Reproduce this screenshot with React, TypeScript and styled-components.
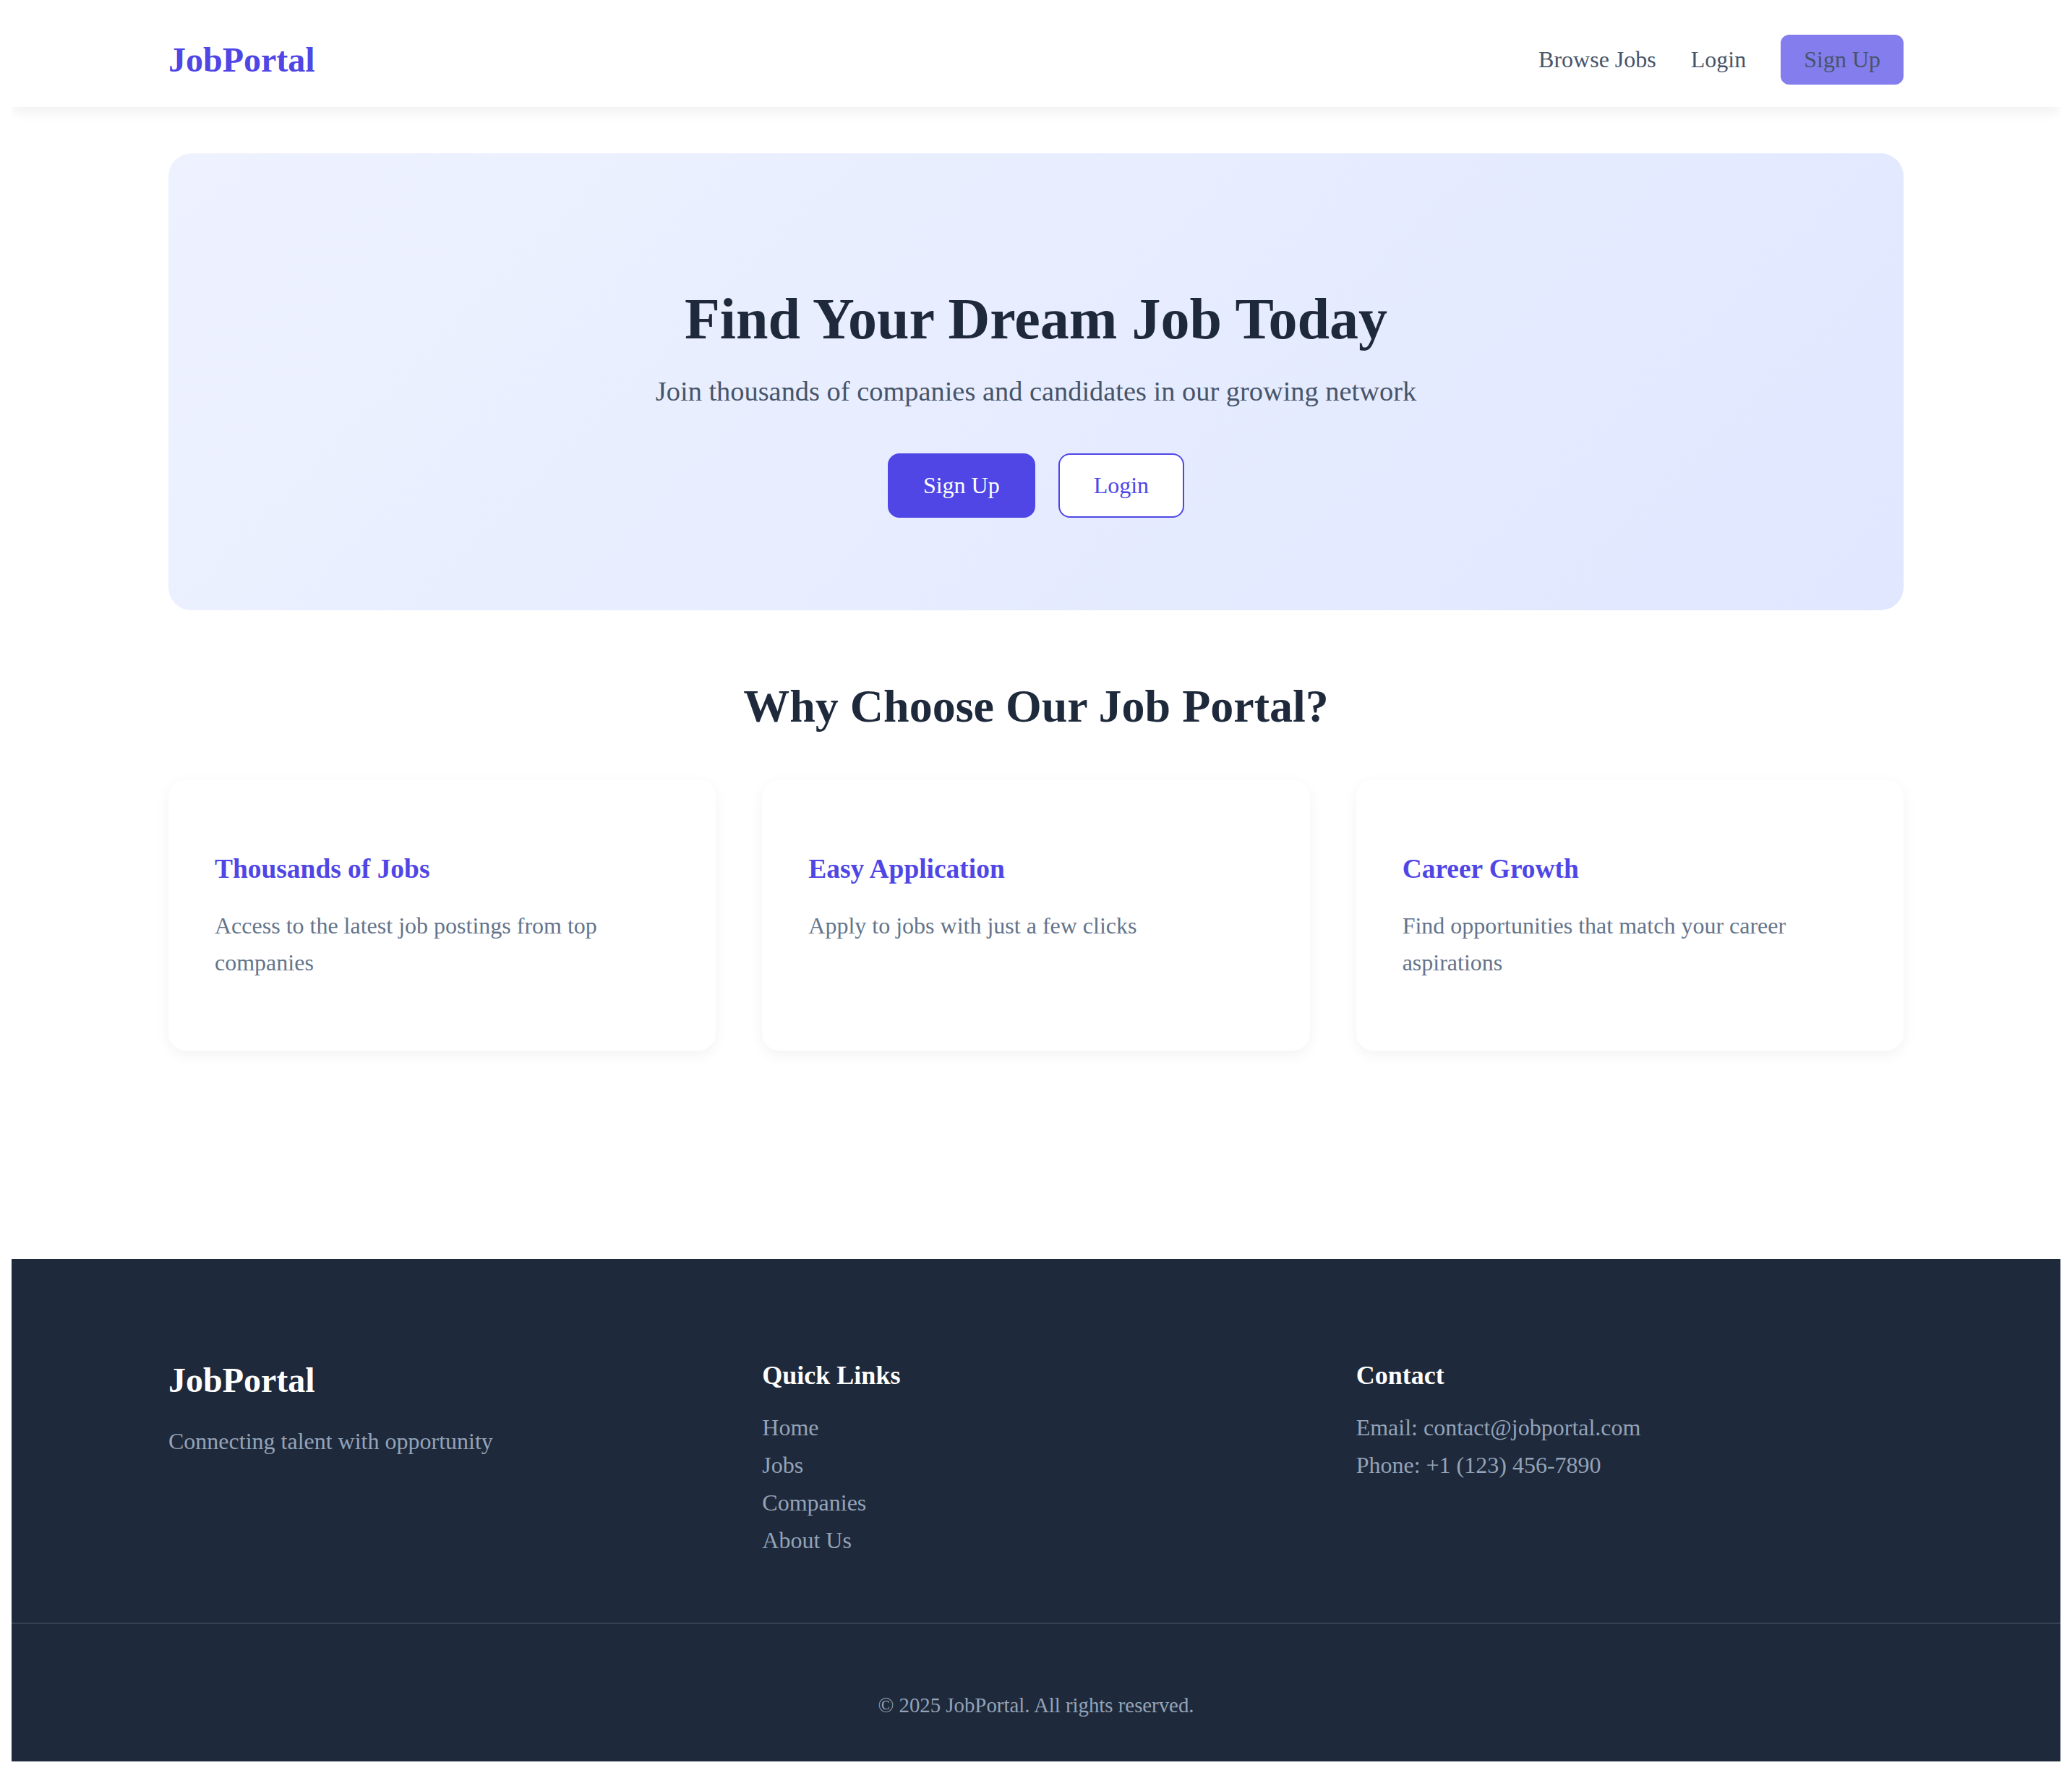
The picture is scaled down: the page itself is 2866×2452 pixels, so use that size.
import React from "react";
import styled, { createGlobalStyle, css } from "styled-components";

const GlobalStyle = createGlobalStyle`
  html, body { background: #ffffff; }
  body {
    margin: 16px;
    font-family: "Liberation Serif", "Times New Roman", serif;
    color: #1e293b;
  }
  * { box-sizing: border-box; }
`;

const Page = styled.div`
  display: flex;
  flex-direction: column;
  min-height: calc(100vh - 32px);
`;

const NavBar = styled.header`
  background: #ffffff;
  box-shadow: 0 4px 20px rgba(0, 0, 0, 0.08);
`;

const NavInner = styled.nav`
  max-width: 2400px;
  margin: 0 auto;
  height: 132px;
  display: flex;
  align-items: center;
  justify-content: space-between;
`;

const Logo = styled.a`
  font-size: 48px;
  font-weight: 700;
  line-height: normal;
  color: #4f46e5;
  text-decoration: none;
`;

const NavLinks = styled.div`
  display: flex;
  align-items: center;
  gap: 48px;
`;

const NavLink = styled.a`
  font-size: 32px;
  line-height: normal;
  color: #475569;
  text-decoration: none;
`;

const NavButton = styled(NavLink)`
  display: inline-block;
  padding: 16px 32px;
  border-radius: 12px;
  background: rgba(79, 70, 229, 0.7);
`;

const Main = styled.main`
  flex: 1;
  width: 100%;
  max-width: 2400px;
  margin: 0 auto;
  padding-top: 64px;
`;

const Hero = styled.section`
  padding: 128px 0;
  text-align: center;
  border-radius: 32px;
  background: linear-gradient(135deg, #eef2ff 0%, #e0e7ff 100%);
`;

const HeroTitle = styled.h1`
  margin: 56px 0 32px;
  font-size: 80px;
  font-weight: 700;
  line-height: normal;
  color: #1e293b;
`;

const HeroText = styled.p`
  margin: 0 0 64px;
  font-size: 38.4px;
  line-height: normal;
  color: #475569;
`;

const ButtonRow = styled.div`
  display: flex;
  justify-content: center;
  gap: 32px;
`;

const HeroButton = styled.button<{ $primary?: boolean }>`
  padding: 24px 47px;
  border: 2px solid #4f46e5;
  border-radius: 16px;
  font-family: inherit;
  font-size: 32px;
  line-height: normal;
  cursor: pointer;
  ${(p) =>
    p.$primary
      ? css`
          background: #4f46e5;
          color: #ffffff;
        `
      : css`
          background: #ffffff;
          color: #4f46e5;
        `}
`;

const Features = styled.section`
  padding-top: 96px;
`;

const SectionTitle = styled.h2`
  margin: 0 0 64px;
  text-align: center;
  font-size: 64px;
  font-weight: 700;
  line-height: normal;
  color: #1e293b;
`;

const CardGrid = styled.div`
  display: grid;
  grid-template-columns: repeat(3, 1fr);
  gap: 64px;
`;

const Card = styled.article`
  background: #ffffff;
  border-radius: 24px;
  padding: 64px;
  box-shadow: 0 6px 20px rgba(0, 0, 0, 0.05);
`;

const CardTitle = styled.h3`
  margin: 38px 0 32px;
  font-size: 37.44px;
  font-weight: 700;
  line-height: normal;
  color: #4f46e5;
`;

const CardText = styled.p`
  margin: 0 0 32px;
  font-size: 32px;
  line-height: 1.6;
  color: #64748b;
`;

const Footer = styled.footer`
  background: #1e293b;
  color: #94a3b8;
`;

const FooterGrid = styled.div`
  max-width: 2400px;
  margin: 0 auto;
  padding: 140px 0 88px;
  display: grid;
  grid-template-columns: repeat(3, 1fr);
  gap: 64px;
  align-items: start;
`;

const FooterLogo = styled.div`
  margin: 0 0 32px;
  font-size: 48px;
  font-weight: 700;
  line-height: normal;
  color: #ffffff;
`;

const FooterTagline = styled.p`
  margin: 0;
  font-size: 32px;
  line-height: 1.6;
`;

const FooterHeading = styled.h4`
  margin: 0 0 25px;
  font-size: 36px;
  font-weight: 700;
  line-height: normal;
  color: #ffffff;
`;

const FooterList = styled.ul`
  list-style: none;
  margin: 0;
  padding: 0;
`;

const FooterItem = styled.li`
  font-size: 32px;
  line-height: 52px;
  color: #94a3b8;
`;

const FooterLink = styled.a`
  color: inherit;
  text-decoration: none;
`;

const Copyright = styled.div`
  border-top: 2px solid #334155;
  padding: 89px 0 54.5px;
  text-align: center;
  font-size: 28.8px;
  line-height: 1.6;
  color: #94a3b8;
`;

const features = [
  {
    title: "Thousands of Jobs",
    text: "Access to the latest job postings from top companies",
  },
  {
    title: "Easy Application",
    text: "Apply to jobs with just a few clicks",
  },
  {
    title: "Career Growth",
    text: "Find opportunities that match your career aspirations",
  },
];

const quickLinks = ["Home", "Jobs", "Companies", "About Us"];

export default function App() {
  return (
    <>
      <GlobalStyle />
      <Page>
        <NavBar>
          <NavInner>
            <Logo href="#">JobPortal</Logo>
            <NavLinks>
              <NavLink href="#">Browse Jobs</NavLink>
              <NavLink href="#">Login</NavLink>
              <NavButton href="#">Sign Up</NavButton>
            </NavLinks>
          </NavInner>
        </NavBar>

        <Main>
          <Hero>
            <HeroTitle>Find Your Dream Job Today</HeroTitle>
            <HeroText>
              Join thousands of companies and candidates in our growing network
            </HeroText>
            <ButtonRow>
              <HeroButton $primary>Sign Up</HeroButton>
              <HeroButton>Login</HeroButton>
            </ButtonRow>
          </Hero>

          <Features>
            <SectionTitle>Why Choose Our Job Portal?</SectionTitle>
            <CardGrid>
              {features.map((f) => (
                <Card key={f.title}>
                  <CardTitle>{f.title}</CardTitle>
                  <CardText>{f.text}</CardText>
                </Card>
              ))}
            </CardGrid>
          </Features>
        </Main>

        <Footer>
          <FooterGrid>
            <div>
              <FooterLogo>JobPortal</FooterLogo>
              <FooterTagline>Connecting talent with opportunity</FooterTagline>
            </div>
            <div>
              <FooterHeading>Quick Links</FooterHeading>
              <FooterList>
                {quickLinks.map((l) => (
                  <FooterItem key={l}>
                    <FooterLink href="#">{l}</FooterLink>
                  </FooterItem>
                ))}
              </FooterList>
            </div>
            <div>
              <FooterHeading>Contact</FooterHeading>
              <FooterList>
                <FooterItem>Email: contact@jobportal.com</FooterItem>
                <FooterItem>Phone: +1 (123) 456-7890</FooterItem>
              </FooterList>
            </div>
          </FooterGrid>
          <Copyright>© 2025 JobPortal. All rights reserved.</Copyright>
        </Footer>
      </Page>
    </>
  );
}
